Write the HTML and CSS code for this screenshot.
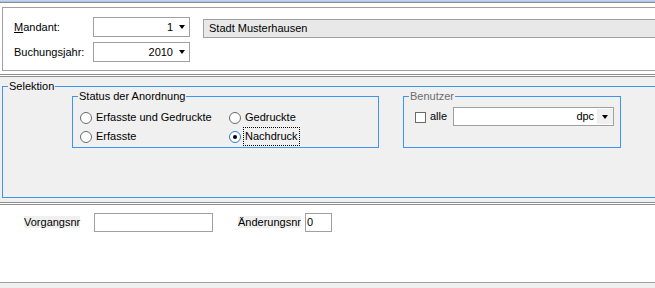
FILE: index.html
```html
<!DOCTYPE html>
<html>
	<head>
		<meta charset='utf-8' />
		<title>Anordnung</title>
		<link rel="stylesheet" href="styles.css">
	</head>
	<body>
		<div class="strip"></div>

		<div class="kopf">
			<div class="kopf-pane">
				<div class="kopf-row">
					<label class="kopf-label"><u>M</u>andant:</label>
					<div class="combo combo-num">
						<span class="combo-text">1</span>
						<span class="combo-btn"><span class="arrow"></span></span>
					</div>
					<div class="readonly">Stadt Musterhausen</div>
				</div>
				<div class="kopf-row">
					<label class="kopf-label">Buchungs<u>j</u>ahr:</label>
					<div class="combo combo-num">
						<span class="combo-text">2010</span>
						<span class="combo-btn"><span class="arrow"></span></span>
					</div>
				</div>
			</div>
		</div>
		<div class="sep"></div>

		<div class="mitte">
			<fieldset class="group group-main">
				<legend>Selektion</legend>
				<div class="group-row">
					<fieldset class="group group-status">
						<legend>Status der Anordnung</legend>
						<div class="radios">
							<label class="radio"><span class="radio-dot"></span>Erfasste und Gedruckte</label>
							<label class="radio"><span class="radio-dot"></span>Gedruckte</label>
							<label class="radio"><span class="radio-dot"></span>Erfasste</label>
							<label class="radio"><span class="radio-dot checked"></span><span class="focus">Nachdruck</span></label>
						</div>
					</fieldset>
					<fieldset class="group group-user">
						<legend class="legend-off">Benutzer</legend>
						<div class="user-row">
							<span class="check"></span>
							<span class="check-label">alle</span>
							<div class="combo combo-user">
								<span class="combo-text">dpc</span>
								<span class="combo-btn btn-grey"><span class="arrow"></span></span>
							</div>
						</div>
					</fieldset>
				</div>
			</fieldset>
		</div>
		<div class="sep2"></div>

		<div class="unten">
			<div class="unten-row">
				<span class="unten-label"><span>Vorgangsnr</span></span>
				<div class="textbox box-vorgang"></div>
				<span class="unten-label label-aend"><span>Änderungsnr</span></span>
				<div class="textbox box-aend">0</div>
			</div>
		</div>
	</body>
</html>
```

FILE: styles.css
```css
body{
	margin:0;
	width:655px;
	height:288px;
	overflow:hidden;
	background-color:#f0f0f0;
	font:11px/13px "Liberation Sans", Tahoma, sans-serif;
	color:#000;
}
.strip{
	height:2px;
	background:linear-gradient(#c8dcf1, #9fbde2);
}
.kopf{
	background-color:#fff;
	border-top:1px solid #8e8e8e;
	border-bottom:1px solid #8e8e8e;
	padding:4px 0 3px 2px;
}
.kopf-pane{
	border:1px solid #a0a0a0;
	border-right:none;
	padding:9px 0 8px 11px;
	display:flex;
	flex-direction:column;
	gap:5px;
}
.kopf-row{
	display:flex;
	align-items:center;
	height:20px;
}
.kopf-label{
	width:79px;
}
.combo{
	box-sizing:border-box;
	border:1px solid #a0a0a0;
	background-color:#fff;
	display:flex;
	align-items:stretch;
}
.combo-num{
	width:97px;
	height:20px;
}
.combo-text{
	flex:1;
	text-align:right;
	padding-right:1px;
	display:flex;
	align-items:center;
	justify-content:flex-end;
}
.combo-btn{
	width:15px;
	display:flex;
	align-items:center;
	justify-content:center;
}
.btn-grey{
	width:16px;
	margin:1px 0;
	background-color:#f0f0f0;
}
.arrow{
	width:0;
	height:0;
	border-left:3.5px solid transparent;
	border-right:3.5px solid transparent;
	border-top:4px solid #000;
}
.readonly{
	box-sizing:border-box;
	align-self:flex-start;
	margin-top:2px;
	margin-left:13px;
	height:19px;
	flex:1;
	border:1px solid #a0a0a0;
	border-right:none;
	background-color:#e8e8e8;
	padding-left:5px;
	display:flex;
	align-items:center;
}
.sep{
	height:1px;
	background-color:#fff;
	border-bottom:1px solid #8e8e8e;
}
.mitte{
	padding:3px 0 4px 2px;
}
.group{
	margin:0;
	padding:0;
	min-width:0;
	border:1px solid #3d95ee;
}
.group legend{
	padding:0 1px;
	margin-left:5px;
	line-height:13px;
}
.group-main{
	border-right:none;
	height:118px;
	box-sizing:border-box;
}
.group-row{
	display:flex;
	gap:24px;
	margin:-3px 0 0 69px;
}
.group-status{
	box-sizing:border-box;
	width:307px;
}
.group-user{
	box-sizing:border-box;
	width:218px;
}
.legend-off{
	color:#6d6d6d;
}
.radios{
	display:grid;
	grid-template-columns:149px auto;
	grid-auto-rows:19px;
	align-items:center;
	padding:5px 0 1px 7px;
}
.radio{
	display:flex;
	align-items:center;
}
.radio-dot{
	box-sizing:border-box;
	width:12px;
	height:12px;
	border:1px solid #6a6a6a;
	border-radius:50%;
	background-color:#fff;
	margin-right:4px;
	display:flex;
	align-items:center;
	justify-content:center;
}
.radio-dot.checked{
	border-color:#2a7fd4;
}
.radio-dot.checked::after{
	content:'';
	width:4px;
	height:4px;
	border-radius:50%;
	background-color:#000;
}
.focus{
	outline:1px dotted #000;
	padding:2px 1px;
	margin-left:-1px;
}
.user-row{
	display:flex;
	align-items:center;
	padding:4px 0 0 11px;
	height:19px;
}
.check{
	box-sizing:border-box;
	width:11px;
	height:11px;
	border:1px solid #6a6a6a;
	background-color:#fff;
	margin-top:1px;
}
.check-label{
	margin-left:4px;
}
.combo-user{
	width:161px;
	height:19px;
	margin-left:6px;
}
.combo-user .combo-text{
	padding-right:3px;
}
.sep2{
	height:1px;
	background-color:#fff;
	border-top:1px solid #8e8e8e;
	border-bottom:1px solid #8e8e8e;
}
.unten{
	box-sizing:border-box;
	height:78px;
	background-color:#fff;
	border-bottom:1px solid #a0a0a0;
	padding:8px 0 0 24px;
}
.unten-row{
	display:flex;
	align-items:center;
	height:19px;
}
.unten-label{
	width:70px;
}
.unten-label span{
	background-color:#f0f0f0;
}
.label-aend{
	width:67px;
	margin-left:25px;
}
.textbox{
	box-sizing:border-box;
	height:19px;
	border:1px solid #a0a0a0;
	background-color:#fff;
	padding-left:1px;
	display:flex;
	align-items:center;
}
.box-vorgang{
	width:119px;
}
.box-aend{
	width:27px;
}
```
